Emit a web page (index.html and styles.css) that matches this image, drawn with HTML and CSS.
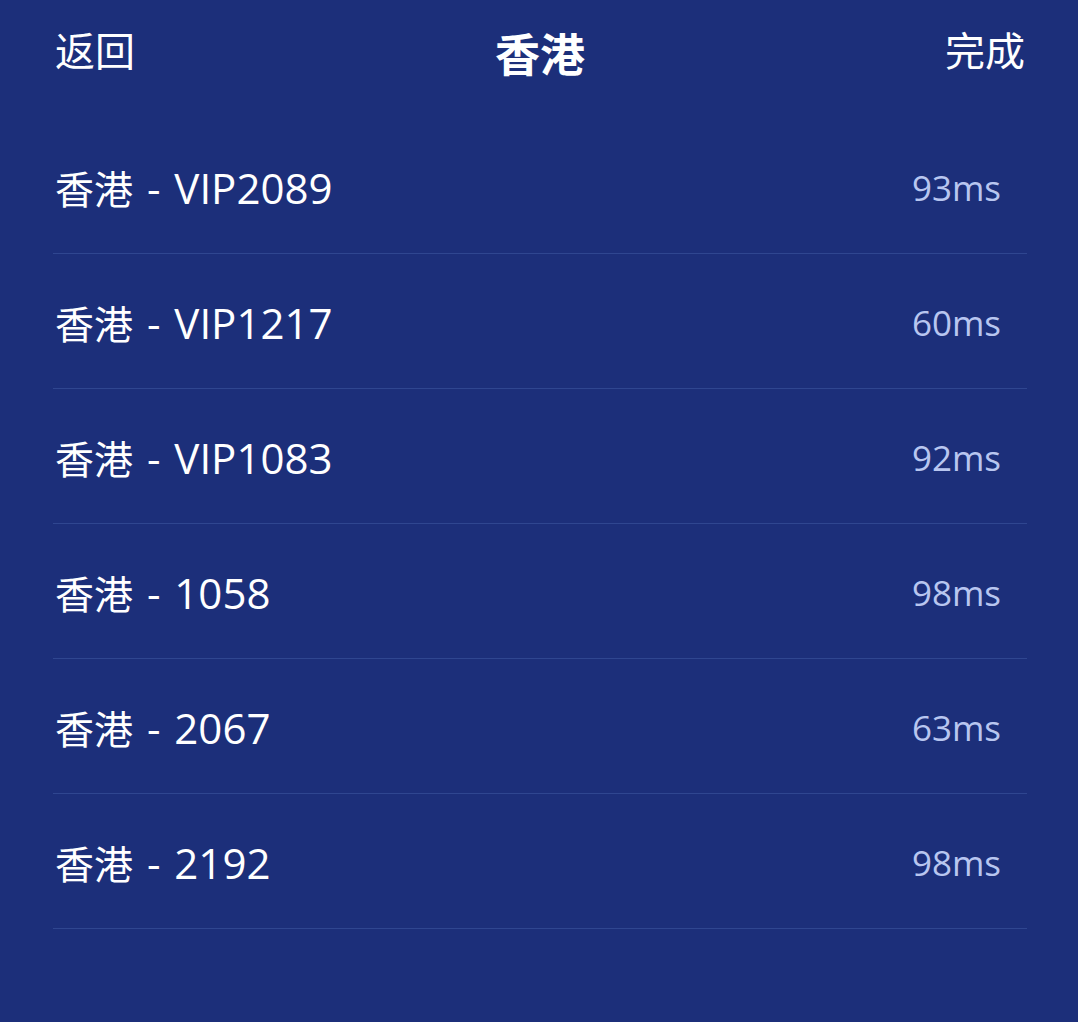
FILE: index.html
```html
<!DOCTYPE html>
<html lang="zh-CN">

<head>
    <meta charset="UTF-8">
    <meta name="viewport" content="width=device-width, initial-scale=1.0">
    <title>香港</title>
    <link rel="stylesheet" href="styles.css">
</head>

<body>
    <section class="page">
        <header class="topbar">
            <span class="topbar_btn">返回</span>
            <h1 class="topbar_title">香港</h1>
            <span class="topbar_btn">完成</span>
        </header>
        <ul class="nodes">
            <li class="node"><span class="node_name">香港<span class="node_code"> - VIP2089</span></span><span class="node_ping">93ms</span></li>
            <li class="node"><span class="node_name">香港<span class="node_code"> - VIP1217</span></span><span class="node_ping">60ms</span></li>
            <li class="node"><span class="node_name">香港<span class="node_code"> - VIP1083</span></span><span class="node_ping">92ms</span></li>
            <li class="node"><span class="node_name">香港<span class="node_code"> - 1058</span></span><span class="node_ping">98ms</span></li>
            <li class="node"><span class="node_name">香港<span class="node_code"> - 2067</span></span><span class="node_ping">63ms</span></li>
            <li class="node"><span class="node_name">香港<span class="node_code"> - 2192</span></span><span class="node_ping">98ms</span></li>
        </ul>
    </section>
</body>

</html>
```

FILE: styles.css
```css
html,
body {
    margin: 0;
    height: 100%;
    background: #1c2f7a;
}

body {
    font-family: "Open Sans", "Noto Sans CJK SC", sans-serif;
    color: #ffffff;
}

.page {
    padding: 0 51px 0 53px;
}

.topbar {
    display: flex;
    align-items: center;
    justify-content: space-between;
    height: 96px;
    padding-top: 2px;
    box-sizing: border-box;
}

.topbar_btn {
    font-size: 40px;
    padding: 0 2px;
}

.topbar_title {
    margin: 0;
    margin-top: 6px;
    font-size: 45px;
    font-weight: 700;
}

.nodes {
    list-style: none;
    margin: 0;
    padding: 0;
    padding-top: 23px;
}

.node {
    display: flex;
    align-items: center;
    justify-content: space-between;
    height: 135px;
    border-bottom: 1px solid #2f4690;
    padding: 3px 26px 0 2px;
    box-sizing: border-box;
}

.node_name {
    font-size: 39px;
}

.node_code {
    font-size: 42px;
    word-spacing: 3px;
}

.node_ping {
    font-size: 35px;
    color: #b8c6f0;
}
```
